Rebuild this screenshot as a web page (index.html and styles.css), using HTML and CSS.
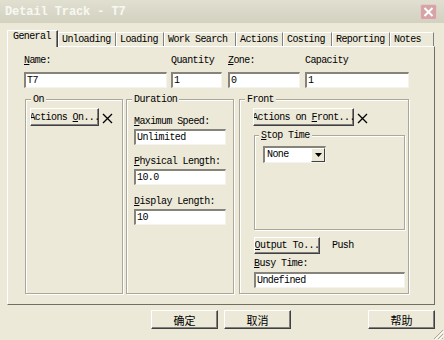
FILE: index.html
```html
<!DOCTYPE html>
<html lang="en">
<head>
    <meta charset="UTF-8">
    <title>Detail Track - T7</title>
    <link rel="stylesheet" href="styles.css">
</head>
<body>
    <div class="window">
        <div class="titlebar">
            <span class="title">Detail Track - T7</span>
            <svg class="close" width="17" height="16" viewBox="0 0 17 16">
                <rect x="0.5" y="0.5" width="16" height="15" rx="2" fill="#d5a4a6" stroke="#e6c9c9"/>
                <path d="M4.5 4 L12.5 12 M12.5 4 L4.5 12" stroke="#fff" stroke-width="2"/>
            </svg>
        </div>

        <div class="content">
            <div class="tabs">
                <div class="tab active">General</div>
                <div class="tab">Unloading</div>
                <div class="tab">Loading</div>
                <div class="tab">Work Search</div>
                <div class="tab">Actions</div>
                <div class="tab">Costing</div>
                <div class="tab">Reporting</div>
                <div class="tab">Notes</div>
            </div>

            <div class="panel">
                <div class="fields">
                    <div class="field f-name">
                        <div class="label"><u>N</u>ame:</div>
                        <div class="input">T7</div>
                    </div>
                    <div class="field f-qty">
                        <div class="label clip">Quantity</div>
                        <div class="input">1</div>
                    </div>
                    <div class="field f-zone">
                        <div class="label"><u>Z</u>one:</div>
                        <div class="input">0</div>
                    </div>
                    <div class="field f-cap">
                        <div class="label clip">Capacity</div>
                        <div class="input">1</div>
                    </div>
                </div>

                <div class="groups">
                    <div class="group g-on">
                        <div class="caption">On</div>
                        <div class="group-body">
                            <div class="btn-row">
                                <button class="btn btn-on"><span>Actions <u>O</u>n...</span></button>
                                <svg class="cross" width="11" height="11" viewBox="0 0 11 11">
                                    <path d="M1 1 L10 10 M10 1 L1 10" stroke="#000" stroke-width="1.3"/>
                                </svg>
                            </div>
                        </div>
                    </div>

                    <div class="group g-duration">
                        <div class="caption">Duration</div>
                        <div class="group-body">
                            <div class="label stacked"><u>M</u>aximum Speed:</div>
                            <div class="input wide">Unlimited</div>
                            <div class="label stacked"><u>P</u>hysical Length:</div>
                            <div class="input wide">10.0</div>
                            <div class="label stacked"><u>D</u>isplay Length:</div>
                            <div class="input wide">10</div>
                        </div>
                    </div>

                    <div class="group g-front">
                        <div class="caption">Front</div>
                        <div class="group-body">
                            <div class="btn-row">
                                <button class="btn btn-front"><span>Actions on <u>F</u>ront...</span></button>
                                <svg class="cross" width="11" height="11" viewBox="0 0 11 11">
                                    <path d="M1 1 L10 10 M10 1 L1 10" stroke="#000" stroke-width="1.3"/>
                                </svg>
                            </div>

                            <div class="group g-stop">
                                <div class="caption"><u>S</u>top Time</div>
                                <div class="group-body">
                                    <div class="select">
                                        <span class="select-text">None</span>
                                        <span class="select-arrow">
                                            <svg width="7" height="4" viewBox="0 0 7 4"><path d="M0 0 H7 L3.5 4 Z" fill="#000"/></svg>
                                        </span>
                                    </div>
                                </div>
                            </div>

                            <div class="btn-row output-row">
                                <button class="btn btn-output"><span><u>O</u>utput To...</span></button>
                                <span class="push">Push</span>
                            </div>
                            <div class="label busy-label"><u>B</u>usy Time:</div>
                            <div class="input busy">Undefined</div>
                        </div>
                    </div>
                </div>
            </div>

            <div class="footer">
                <button class="btn btn-foot">确定</button>
                <button class="btn btn-foot">取消</button>
                <button class="btn btn-foot btn-help">帮助</button>
            </div>
        </div>

        <svg class="grip" width="12" height="12" viewBox="0 0 12 12">
            <path d="M11 2 L2 11 M11 6 L6 11 M11 10 L10 11" stroke="#aca899" stroke-width="1"/>
            <path d="M12 3 L3 12 M12 7 L7 12" stroke="#fff" stroke-width="1"/>
        </svg>
    </div>
</body>
</html>
```

FILE: styles.css
```css
body {
    margin: 0;
    background-color: #ece9d8;
    font-family: "Liberation Mono", "DejaVu Sans Mono", monospace;
    font-size: 10px;
    letter-spacing: -0.6px;
    color: #000;
}

.window {
    position: relative;
    width: 444px;
    height: 340px;
    overflow: hidden;
    background-color: #ece9d8;
}

.titlebar {
    height: 23px;
    box-sizing: border-box;
    display: flex;
    justify-content: space-between;
    align-items: center;
    padding: 0 7px 0 5px;
    background: linear-gradient(#e0dfd0, #d3d2c1);
}

.title {
    font-size: 12px;
    font-weight: bold;
    letter-spacing: -0.1px;
    color: #f8f8f2;
}

.content {
    padding: 7px 9px 0 7px;
}

/* tabs */

.tabs {
    display: flex;
    align-items: flex-end;
    height: 16px;
}

.tab {
    height: 14px;
    box-sizing: border-box;
    line-height: 13px;
    padding-left: 3px;
    border-top: 1px solid #fff;
    border-left: 1px solid #fff;
    border-right: 1px solid #808080;
    white-space: nowrap;
}

.tab.active {
    position: relative;
    z-index: 1;
    height: 17px;
    margin-bottom: -1px;
    padding-left: 5px;
    line-height: 12px;
    background-color: #ece9d8;
    border-right: 1px solid #404040;
    box-shadow: inset -1px 0 #808080;
}

.tab:nth-child(1) { width: 51px; }
.tab:nth-child(2) { width: 58px; }
.tab:nth-child(3) { width: 48px; }
.tab:nth-child(4) { width: 72px; }
.tab:nth-child(5) { width: 47px; }
.tab:nth-child(6) { width: 49px; }
.tab:nth-child(7) { width: 58px; }
.tab:nth-child(8) { width: 44px; }

.panel {
    height: 259px;
    box-sizing: border-box;
    border: 1px solid;
    border-color: #fff #716f64 #716f64 #fff;
    padding: 8px 0 0 16px;
}

/* top fields */

.fields {
    display: flex;
}

.label {
    height: 11px;
    line-height: 11px;
    margin-bottom: 6px;
    white-space: nowrap;
    overflow: hidden;
}

.label.clip {
    height: 10px;
    margin-bottom: 7px;
}

.f-name { width: 143px; margin-right: 4px; }
.f-qty { width: 51px; margin-right: 6px; }
.f-zone { width: 72px; margin-right: 5px; }
.f-cap { width: 104px; }

.input {
    height: 16px;
    box-sizing: border-box;
    background-color: #fff;
    border-style: solid;
    border-width: 2px 1px 1px 2px;
    border-color: #86847a #f4f3ee #f4f3ee #86847a;
    padding-left: 1px;
    line-height: 13px;
    white-space: nowrap;
    overflow: hidden;
}

/* group boxes */

.groups {
    display: flex;
    margin-top: 11px;
    padding-left: 1px;
}

.group {
    height: 195px;
    box-sizing: border-box;
    border: 1px solid #aca899;
    box-shadow: inset 1px 1px #fff, 1px 1px #fff;
}

.caption {
    width: fit-content;
    margin: -6px 0 0 5px;
    padding: 0 2px;
    line-height: 11px;
    background-color: #ece9d8;
    white-space: nowrap;
}

.g-on {
    width: 98px;
    margin-right: 3px;
}

.g-on .group-body {
    padding-left: 4px;
}

.g-duration {
    width: 108px;
    margin-right: 5px;
}

.g-duration .group-body {
    padding-left: 7px;
}

.g-front {
    width: 170px;
}

.g-front > .group-body {
    padding-left: 14px;
}

.btn-row {
    display: flex;
    align-items: center;
    margin-top: 3px;
}

.cross {
    margin-left: 3px;
    margin-top: 2px;
}

.btn {
    display: flex;
    justify-content: center;
    align-items: center;
    box-sizing: border-box;
    padding: 0;
    overflow: hidden;
    white-space: nowrap;
    background-color: #ece9d8;
    border: 1px solid;
    border-color: #fff #404040 #404040 #fff;
    box-shadow: inset -1px -1px #808080;
    font-family: inherit;
    font-size: inherit;
    letter-spacing: inherit;
    color: #000;
}

.btn span {
    flex-shrink: 0;
}

.btn-on {
    width: 69px;
    height: 18px;
}

.btn-front {
    width: 101px;
    height: 18px;
    margin-left: -1px;
}

.label.stacked {
    margin-top: 11px;
    margin-bottom: 2px;
}

.input.wide {
    width: 92px;
}

.g-stop {
    width: 151px;
    height: 95px;
    margin-top: 9px;
}

.g-stop .caption {
    margin-left: 4px;
}

.g-stop .group-body {
    padding-left: 8px;
}

.select {
    display: flex;
    width: 63px;
    height: 17px;
    box-sizing: border-box;
    margin-top: 5px;
    background-color: #fff;
    border-style: solid;
    border-width: 2px 1px 1px 2px;
    border-color: #86847a #f4f3ee #f4f3ee #86847a;
}

.select-text {
    flex: 1;
    line-height: 13px;
    padding-left: 2px;
}

.select-arrow {
    width: 14px;
    display: flex;
    justify-content: center;
    align-items: center;
    box-sizing: border-box;
    background-color: #ece9d8;
    border: 1px solid;
    border-color: #fff #404040 #404040 #fff;
}

.output-row {
    margin-top: 7px;
}

.btn-output {
    width: 66px;
    height: 17px;
}

.push {
    margin-left: 12px;
}

.label.busy-label {
    margin-top: 4px;
    margin-bottom: 3px;
}

.input.busy {
    width: 151px;
}

/* footer */

.footer {
    display: flex;
    gap: 6px;
    margin-top: 5px;
    padding-left: 144px;
}

.btn-foot {
    width: 67px;
    height: 19px;
    font-family: "Noto Sans CJK SC", sans-serif;
    font-size: 11px;
    letter-spacing: 0;
}

.btn-help {
    margin-left: auto;
}

.grip {
    position: absolute;
    right: 0;
    bottom: 0;
}
```
